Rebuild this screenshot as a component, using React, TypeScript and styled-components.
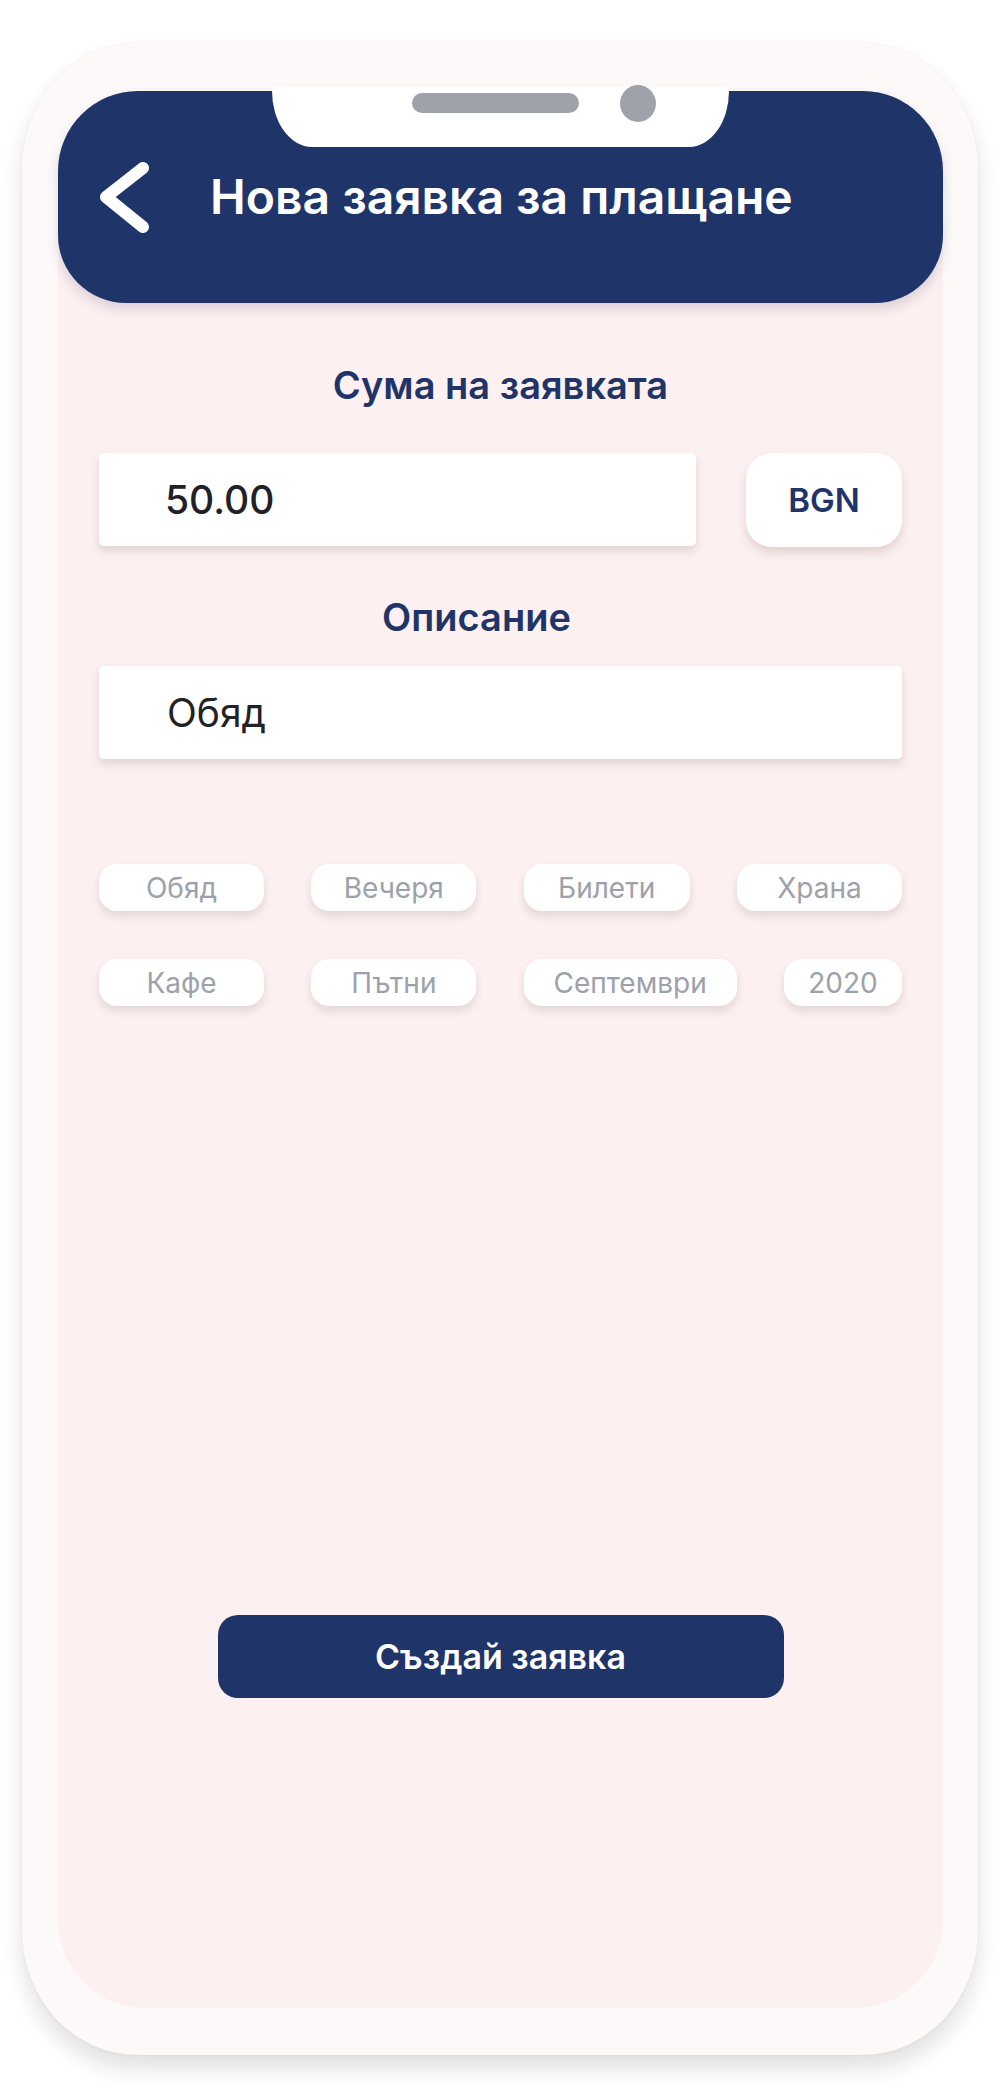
import React from "react";
import styled, { createGlobalStyle } from "styled-components";

const NAVY = "#1f3469";
const FRAME = "#fdf9f9";
const SCREEN = "#fcf0f0";
const MUTED = "#9da1ab";

const GlobalStyle = createGlobalStyle`
  body {
    margin: 0;
    background: #ffffff;
    font-family: Inter, "Noto Sans", "DejaVu Sans", sans-serif;
  }
  * {
    box-sizing: border-box;
  }
`;

const Page = styled.div`
  padding: 43px 22px 45px;
`;

const Phone = styled.div`
  width: 956px;
  height: 2012px;
  padding: 48px 35px 47px 36px;
  border-radius: 115px / 125px;
  background: ${FRAME};
  box-shadow: 0 14px 22px rgba(0, 0, 0, 0.12), 0 0 3px rgba(0, 0, 0, 0.06);
`;

const Screen = styled.div`
  position: relative;
  height: 100%;
  border-radius: 88px;
  background: ${SCREEN};
  display: flex;
  flex-direction: column;
`;

// camera cut-out sits over the header
const Notch = styled.div`
  position: absolute;
  top: -4px;
  left: 214px;
  width: 457px;
  height: 60px;
  background: #ffffff;
  border-radius: 0 0 40px 40px / 0 0 56px 56px;
  z-index: 2;
  display: flex;
  align-items: center;
`;

const NotchRow = styled.div`
  display: flex;
  align-items: center;
  gap: 41px;
  height: 32px;
  margin: 0 0 28px 140px;
`;

const Speaker = styled.div`
  width: 167px;
  height: 20px;
  border-radius: 10px;
  background: #9ea2ab;
`;

const Camera = styled.div`
  width: 36px;
  height: 37px;
  border-radius: 50%;
  background: #9ea2ab;
`;

const Header = styled.header`
  flex: none;
  height: 212px;
  display: flex;
  align-items: center;
  padding-left: 33px;
  border-radius: 80px 80px 68px 68px;
  background: ${NAVY};
  box-shadow: 0 6px 12px rgba(70, 60, 110, 0.18);
`;

const BackButton = styled.button`
  width: 60px;
  height: 80px;
  padding: 0;
  border: 0;
  background: none;
  display: flex;
`;

const Title = styled.h1`
  margin: 0 0 0 59px;
  font-size: 48px;
  font-weight: 600;
  line-height: 56px;
  color: #ffffff;
`;

const Content = styled.main`
  display: flex;
  flex-direction: column;
  padding: 0 41px;
`;

const SectionLabel = styled.h2<{ $top: number; $shift?: number }>`
  margin: ${(p) => p.$top}px 0 0;
  padding-right: ${(p) => (p.$shift ?? 0) * 2}px;
  text-align: center;
  font-size: 38px;
  font-weight: 600;
  line-height: 44px;
  color: ${NAVY};
`;

const AmountRow = styled.div`
  display: flex;
  justify-content: space-between;
  margin-top: 46px;
`;

const Field = styled.div<{ $width?: number; $weight?: number; $inset: number }>`
  width: ${(p) => (p.$width ? `${p.$width}px` : "100%")};
  height: 93px;
  display: flex;
  align-items: center;
  padding-left: ${(p) => p.$inset}px;
  border-radius: 5px;
  background: #ffffff;
  box-shadow: 0 5px 8px rgba(140, 110, 110, 0.22);
  font-size: 39px;
  font-weight: ${(p) => p.$weight ?? 400};
  color: #1f2227;
`;

const CurrencyButton = styled.button`
  width: 156px;
  height: 94px;
  border: 0;
  border-radius: 26px;
  background: #ffffff;
  box-shadow: 0 6px 10px rgba(140, 110, 110, 0.22);
  font-family: inherit;
  font-size: 33px;
  font-weight: 600;
  color: ${NAVY};
`;

const DescriptionField = styled(Field)`
  margin-top: 27px;
`;

const Chips = styled.div`
  display: flex;
  flex-wrap: wrap;
  justify-content: space-between;
  row-gap: 48px;
  margin-top: 105px;
`;

const Chip = styled.button<{ $w: number }>`
  width: ${(p) => p.$w}px;
  height: 47px;
  padding: 0;
  border: 0;
  border-radius: 18px;
  background: #ffffff;
  box-shadow: 0 5px 8px rgba(140, 110, 110, 0.2);
  font-family: inherit;
  font-size: 28px;
  font-weight: 400;
  color: ${MUTED};
`;

const SubmitButton = styled.button`
  align-self: center;
  width: 566px;
  height: 83px;
  margin-top: 609px;
  border: 0;
  border-radius: 20px;
  background: ${NAVY};
  font-family: inherit;
  font-size: 34px;
  font-weight: 600;
  color: #ffffff;
`;

const chips = [
  { label: "Обяд", w: 165 },
  { label: "Вечеря", w: 165 },
  { label: "Билети", w: 166 },
  { label: "Храна", w: 165 },
  { label: "Кафе", w: 165 },
  { label: "Пътни", w: 165 },
  { label: "Септември", w: 213 },
  { label: "2020", w: 118 },
];

const BackIcon = () => (
  <svg width="60" height="80" viewBox="0 0 60 80">
    <path
      d="M52 11 L15 40 L52 70"
      fill="none"
      stroke="#ffffff"
      strokeWidth="12"
      strokeLinecap="round"
      strokeLinejoin="round"
    />
  </svg>
);

export default function App() {
  return (
    <Page>
      <GlobalStyle />
      <Phone>
        <Screen>
          <Notch>
            <NotchRow>
              <Speaker />
              <Camera />
            </NotchRow>
          </Notch>
          <Header>
            <BackButton aria-label="Назад">
              <BackIcon />
            </BackButton>
            <Title>Нова заявка за плащане</Title>
          </Header>
          <Content>
            <SectionLabel $top={60}>Сума на заявката</SectionLabel>
            <AmountRow>
              <Field $width={597} $weight={500} $inset={66}>
                50.00
              </Field>
              <CurrencyButton>BGN</CurrencyButton>
            </AmountRow>
            <SectionLabel $top={48} $shift={24}>
              Описание
            </SectionLabel>
            <DescriptionField $inset={68}>Обяд</DescriptionField>
            <Chips>
              {chips.map((c) => (
                <Chip key={c.label} $w={c.w}>
                  {c.label}
                </Chip>
              ))}
            </Chips>
            <SubmitButton>Създай заявка</SubmitButton>
          </Content>
        </Screen>
      </Phone>
    </Page>
  );
}
